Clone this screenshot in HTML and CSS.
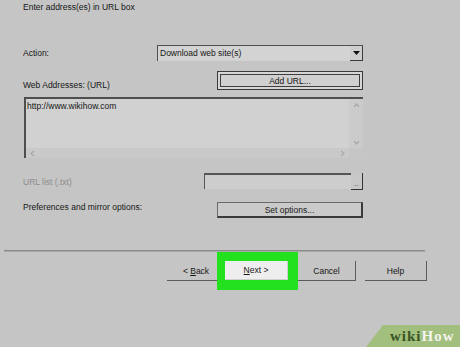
FILE: index.html
```html
<!DOCTYPE html>
<html lang="en">
<head>
  <meta charset="UTF-8">
  <title>Enter address(es) in URL box</title>
  <link rel="stylesheet" href="styles.css">
</head>
<body>
  <div class="dialog">
    <div class="intro">Enter address(es) in URL box</div>

    <div class="row row-action">
      <span class="label">Action:</span>
      <div class="select">
        <span class="select-text">Download web site(s)</span>
        <span class="select-arrow">
          <svg width="7" height="4" viewBox="0 0 7 4"><polygon points="0,0 7,0 3.5,4" fill="#111"/></svg>
        </span>
      </div>
    </div>

    <div class="row row-web">
      <span class="label">Web Addresses: (URL)</span>
      <button class="btn btn-focus">Add URL...</button>
    </div>

    <div class="urlbox">
      <div class="urlbox-text">http://www.wikihow.com</div>
      <div class="vscroll">
        <svg width="7" height="5" viewBox="0 0 7 5"><polyline points="1,4 3.5,1 6,4" fill="none" stroke="#a8a8a8" stroke-width="1.2"/></svg>
        <svg width="7" height="5" viewBox="0 0 7 5"><polyline points="1,1 3.5,4 6,1" fill="none" stroke="#a8a8a8" stroke-width="1.2"/></svg>
      </div>
      <div class="hscroll">
        <svg width="5" height="7" viewBox="0 0 5 7"><polyline points="4,1 1,3.5 4,6" fill="none" stroke="#a8a8a8" stroke-width="1.2"/></svg>
        <svg width="5" height="7" viewBox="0 0 5 7"><polyline points="1,1 4,3.5 1,6" fill="none" stroke="#a8a8a8" stroke-width="1.2"/></svg>
      </div>
      <div class="corner"></div>
    </div>

    <div class="row row-list">
      <span class="label disabled">URL list (.txt)</span>
      <div class="list-field">
        <div class="list-input"></div>
        <div class="list-browse">..</div>
      </div>
    </div>

    <div class="row row-prefs">
      <span class="label">Preferences and mirror options:</span>
      <button class="btn btn-plain">Set options...</button>
    </div>
  </div>

  <div class="separator"></div>

  <div class="nav">
    <button class="nav-btn nav-back">&lt; <u>B</u>ack</button>
    <div class="highlight">
      <button class="nav-btn nav-next"><u>N</u>ext &gt;</button>
    </div>
    <button class="nav-btn nav-cancel">Cancel</button>
    <button class="nav-btn nav-help">Help</button>
  </div>

  <div class="wikihow"><span class="wh-wiki">wiki</span><span class="wh-how">How</span></div>
</body>
</html>
```

FILE: styles.css
```css
body {
  margin: 0;
  width: 460px;
  height: 347px;
  overflow: hidden;
  position: relative;
  background-color: #c5c5c5;
  color: #161616;
  font-family: "Liberation Sans", Arial, sans-serif;
  font-size: 8.5px;
}
.dialog {
  width: 340px;
  padding: 2px 0 0 23px;
}
.intro {
  line-height: 10px;
}
.row {
  display: flex;
  justify-content: space-between;
}
.label {
  line-height: 10px;
  white-space: nowrap;
}
.disabled {
  color: #8c8c8c;
}

/* action dropdown */
.row-action {
  margin-top: 33px;
  align-items: center;
}
.select {
  display: flex;
  width: 205px;
  height: 15px;
  border-top: 1px solid #505050;
  border-left: 1px solid #505050;
  background-color: #d3d3d3;
}
.select-text {
  flex: 1;
  padding-left: 2px;
  line-height: 15px;
}
.select-arrow {
  width: 12px;
  display: flex;
  align-items: center;
  justify-content: center;
  border-right: 1px solid #3c3c3c;
  border-bottom: 1px solid #3c3c3c;
  background-color: #cecece;
}

/* buttons */
.btn {
  font-family: inherit;
  font-size: 8.5px;
  color: #161616;
  padding: 0;
  width: 146px;
}
.btn-focus {
  height: 19px;
  border: 1px solid #3a3a3a;
  background-color: #d0d0d0;
  box-shadow: inset 0 0 0 2px #d6d6d6, inset 0 0 0 3px #3e3e3e;
}
.btn-plain {
  height: 16px;
  border: 1px solid #6a6a6a;
  border-right: 2px solid #3a3a3a;
  border-bottom: 2px solid #3a3a3a;
  background-color: #cacaca;
}
.row-web {
  margin-top: 10px;
  align-items: flex-end;
}

/* url box */
.urlbox {
  margin: 7px 0 0 1px;
  width: 337px;
  height: 59px;
  border-top: 2px solid #4e4e4e;
  border-left: 2px solid #4e4e4e;
  background-color: #d1d1d1;
  display: grid;
  grid-template-columns: 1fr 14px;
  grid-template-rows: 1fr 10px;
}
.urlbox-text {
  padding: 2px 0 0 1px;
  line-height: 10px;
}
.vscroll {
  display: flex;
  flex-direction: column;
  justify-content: space-between;
  align-items: center;
  padding: 4px 0 3px;
  background-color: #cbcbcb;
}
.hscroll {
  display: flex;
  justify-content: space-between;
  align-items: center;
  padding: 0 4px;
  background-color: #c9c9c9;
}
.corner {
  background-color: #c6c6c6;
}

/* url list */
.row-list {
  margin-top: 15px;
  height: 17px;
  align-items: center;
}
.list-field {
  display: flex;
  align-items: flex-start;
}
.list-input {
  width: 146px;
  height: 14px;
  border-top: 2px solid #555555;
  border-left: 1px solid #555555;
  background-color: #cdcdcd;
}
.list-browse {
  width: 11px;
  height: 16px;
  border-right: 1px solid #333333;
  border-bottom: 1px solid #333333;
  background-color: #c8c8c8;
  display: flex;
  align-items: flex-end;
  justify-content: center;
  font-size: 8px;
  line-height: 10px;
  color: #444444;
}

.row-prefs {
  margin-top: 12px;
  align-items: flex-start;
}

.separator {
  margin: 32px 0 0 4px;
  width: 421px;
  height: 1px;
  border-top: 1px solid #8a8a8a;
  background-color: #a9a9a9;
}

/* wizard buttons */
.nav {
  display: flex;
  align-items: flex-start;
  padding-left: 167px;
}
.nav-btn {
  margin-top: 9px;
  height: 20px;
  padding: 0;
  border: none;
  border-right: 1px solid #5c5c5c;
  border-bottom: 1px solid #5c5c5c;
  background-color: #c5c5c5;
  font-family: inherit;
  font-size: 8.5px;
  color: #161616;
}
.nav-back {
  width: 50px;
  border-right: none;
  padding-left: 8px;
}
.highlight {
  padding: 9px 10px 10px 8px;
  background-color: #23e11f;
}
.nav-next {
  margin-top: 0;
  width: 63px;
  height: 19px;
  background-color: #eeeeee;
  border-right: 1px solid #cfcfcf;
  border-bottom: 1px solid #cfcfcf;
}
.nav-cancel {
  width: 58px;
}
.nav-help {
  width: 62px;
  margin-left: 9px;
}

/* watermark */
.wikihow {
  position: absolute;
  right: 0;
  bottom: 0;
  width: 94px;
  height: 22px;
  background-color: #a2bf7d;
  clip-path: polygon(17px 0, 100% 0, 100% 100%, 0 100%);
  box-sizing: border-box;
  padding: 3px 0 0 24px;
  font-family: "Liberation Serif", "Times New Roman", serif;
  font-weight: bold;
  font-size: 15px;
  line-height: 17px;
  letter-spacing: 1px;
}
.wh-wiki {
  color: #3a5424;
}
.wh-how {
  color: #f3f3f0;
}
```
